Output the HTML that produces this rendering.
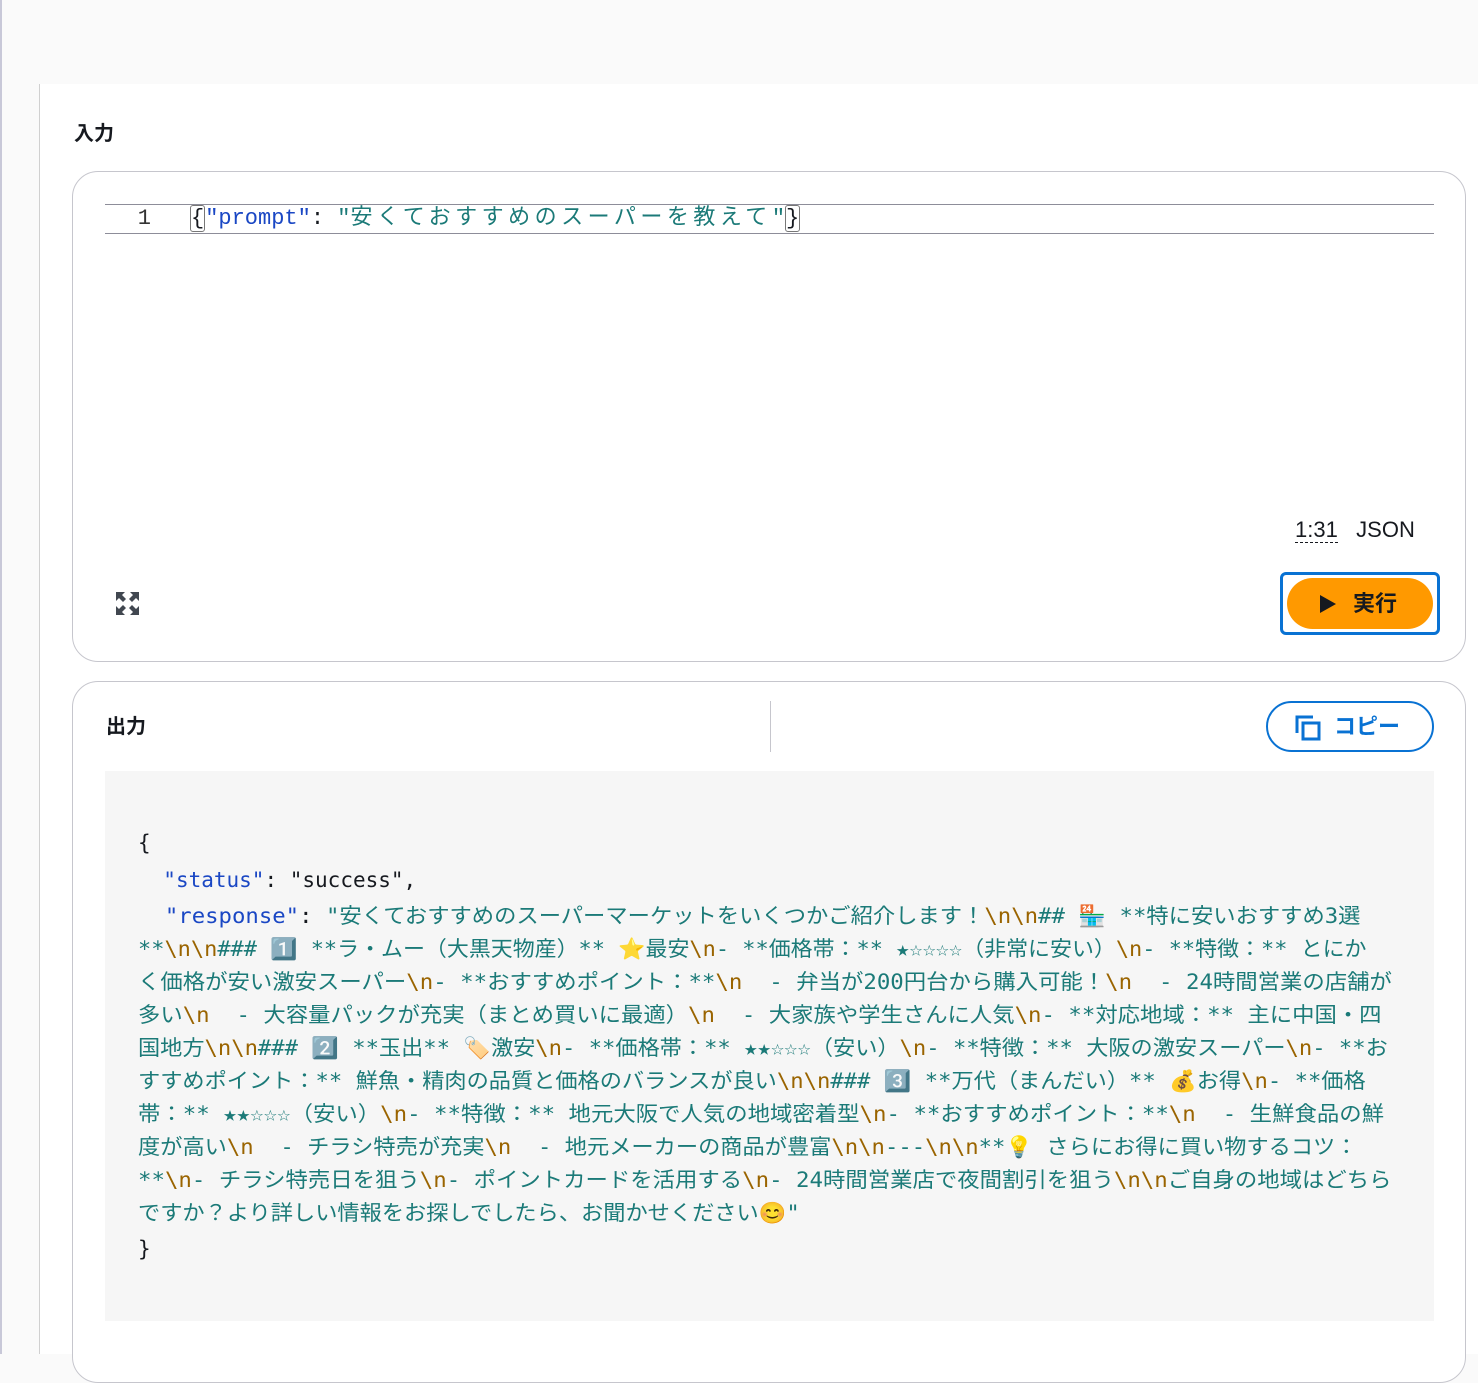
<!DOCTYPE html>
<html><head><meta charset="utf-8">
<style>
body{margin:0;width:1478px;height:1354px;overflow:hidden;background:#fafafa;font-family:"Liberation Sans","Noto Sans CJK JP",sans-serif;position:relative}
.lb{position:absolute;left:0;top:0;width:2px;height:1354px;background:#c8c8d8}
.main{position:absolute;left:39px;top:84px;width:1439px;height:1270px;background:#fff;border-left:1px solid #d0d0d0}
.h{position:absolute;font-size:20px;font-weight:bold;color:#16191f}
.card{position:absolute;left:72px;width:1392px;border:1px solid #c6c6cd;border-radius:26px;background:#fff}
.ed{position:absolute;left:105px;top:204px;width:1329px;height:28px;border-top:1px solid #8d8d99;border-bottom:1px solid #8d8d99;font-family:"Liberation Mono","Noto Sans CJK JP",monospace;font-size:22px;line-height:28px}
.gut{position:absolute;left:0;text-align:right;color:#333;}
.code{position:absolute;left:85px;white-space:nowrap;color:#16191f}
.k{color:#1a47c4}.s{color:#1b7a78}
.br{border:1px solid #777;border-radius:3px}
.out{position:absolute;left:105px;top:771px;width:1329px;height:550px;background:#f6f6f6}
.ln{position:absolute;left:138px;white-space:pre;font-family:"DejaVu Sans Mono","Noto Sans CJK JP",monospace;font-size:21px;line-height:30px;color:#1b7a78}
.e{color:#9a6400}
</style></head><body>
<div class="lb"></div>
<div class="main"></div>
<div class="h" style="left:74px;top:117px">入力</div>
<div class="card" style="top:171px;height:489px"></div>
<div class="ed"><div class="gut" style="width:46px">1</div>
<div class="code"><span class="br">{</span><span class="k">"prompt"</span>: <span class="s">"<span style="letter-spacing:4.5px">安くておすすめのスーパーを教えて</span>"</span><span class="br">}</span></div></div>
<div style="position:absolute;left:1295px;top:517px;font-size:22px;color:#16191f"><span style="border-bottom:1px dashed #16191f">1:31</span>&nbsp;&nbsp;&nbsp;JSON</div>
<svg style="position:absolute;left:116px;top:592px" width="23" height="23" viewBox="0 0 23 23" fill="#414750"><path d="M0 0h9l-3 3 4 4-3 3-4-4-3 3zM23 0v9l-3-3-4 4-3-3 4-4-3-3zM0 23v-9l3 3 4-4 3 3-4 4 3 3zM23 23h-9l3-3-4-4 3-3 4 4 3-3z"/></svg>
<div style="position:absolute;left:1280px;top:572px;width:160px;height:63px;border:3px solid #0972d3;border-radius:6px;box-sizing:border-box"></div>
<div style="position:absolute;left:1287px;top:578px;width:146px;height:51px;background:#ff9900;border-radius:26px;font-size:22px;font-weight:bold;color:#16191f;line-height:51px"><svg style="position:absolute;left:33px;top:17px" width="16" height="18"><path d="M0 0L16 9 0 18z" fill="#16191f"/></svg><span style="position:absolute;left:66px">実行</span></div>
<div class="card" style="top:681px;height:700px"></div>
<div class="h" style="left:106px;top:710px">出力</div>
<div style="position:absolute;left:770px;top:701px;width:1px;height:51px;background:#c6c6cd"></div>
<div style="position:absolute;left:1266px;top:701px;width:168px;height:51px;border:2px solid #0972d3;border-radius:26px;box-sizing:border-box;color:#0972d3;font-size:22px;font-weight:bold;line-height:47px"><svg style="position:absolute;left:27px;top:12px" width="26" height="26" fill="none" stroke="#0972d3" stroke-width="3"><path d="M2 18V2h16"/><rect x="8" y="8" width="16" height="16"/></svg><span style="position:absolute;left:66px">コピー</span></div>
<div class="out"></div>
<div id="o"></div>
<script>
var L=[
[828,'{',1,0],
[865,'  <span class="k">"status"</span><span style="color:#16191f">: </span>"success"<span style="color:#16191f">,</span>',1,0],
[901,'  <span class="k">"response"</span><span style="color:#16191f">: </span>"安くておすすめのスーパーマーケットをいくつかご紹介します！\\n\\n## 🏪 **特に安いおすすめ3選',0,1222],
[934,'**\\n\\n### 1️⃣ **ラ・ムー（大黒天物産）** ⭐最安\\n- **価格帯：** ★☆☆☆☆（非常に安い）\\n- **特徴：** とにか',0,1228],
[967,'く価格が安い激安スーパー\\n- **おすすめポイント：**\\n  - 弁当が200円台から購入可能！\\n  - 24時間営業の店舗が',0,1254],
[1000,'多い\\n  - 大容量パックが充実（まとめ買いに最適）\\n  - 大家族や学生さんに人気\\n- **対応地域：** 主に中国・四',0,1244],
[1033,'国地方\\n\\n### 2️⃣ **玉出** 🏷️激安\\n- **価格帯：** ★★☆☆☆（安い）\\n- **特徴：** 大阪の激安スーパー\\n- **お',0,1250],
[1066,'すすめポイント：** 鮮魚・精肉の品質と価格のバランスが良い\\n\\n### 3️⃣ **万代（まんだい）** 💰お得\\n- **価格',0,1228],
[1099,'帯：** ★★☆☆☆（安い）\\n- **特徴：** 地元大阪で人気の地域密着型\\n- **おすすめポイント：**\\n  - 生鮮食品の鮮',0,1246],
[1132,'度が高い\\n  - チラシ特売が充実\\n  - 地元メーカーの商品が豊富\\n\\n---\\n\\n**💡 さらにお得に買い物するコツ：',0,1220],
[1165,'**\\n- チラシ特売日を狙う\\n- ポイントカードを活用する\\n- 24時間営業店で夜間割引を狙う\\n\\nご自身の地域はどちら',0,1254],
[1198,'ですか？より詳しい情報をお探しでしたら、お聞かせください😊"',0,662],
[1234,'}',1,0]];
var h='';L.forEach(function(l){var t=l[1].replace(/\\n/g,'<span class="e">\\n</span>');h+='<div class="ln" data-w="'+l[3]+'" style="top:'+l[0]+'px;'+(l[2]?'color:#16191f':'')+'">'+t+'</div>';});
document.getElementById('o').innerHTML=h;
document.querySelectorAll('.ln').forEach(function(d){var tw=+d.getAttribute('data-w');if(tw){var w=d.scrollWidth;d.style.transformOrigin='0 0';d.style.transform='scaleX('+(tw/w)+')';}});
</script>
</body></html>
